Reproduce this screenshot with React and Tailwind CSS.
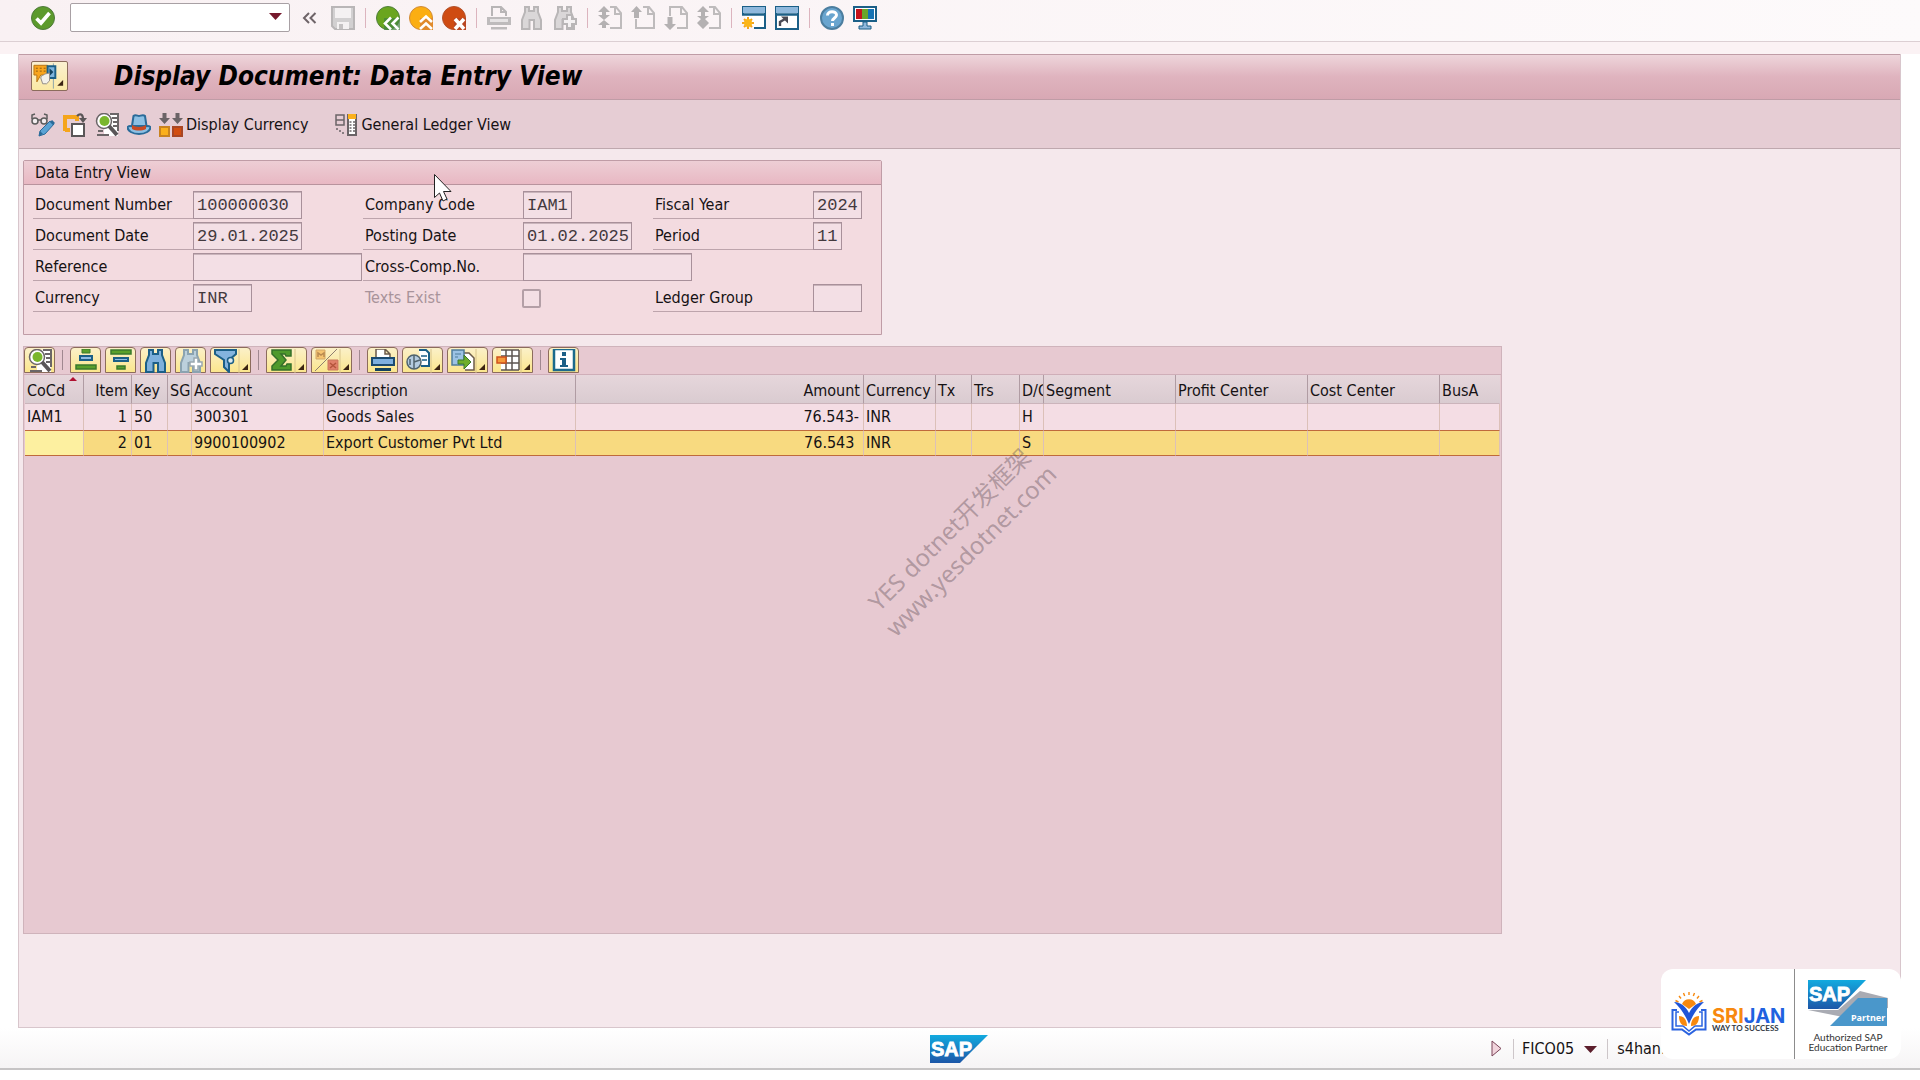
import { useState } from 'react'
import clsx from 'clsx'

const COLUMNS = [
  { key: 'cocd', label: 'CoCd', width: 'w-[59px]', sorted: true },
  { key: 'item', label: 'Item', width: 'w-[48px]', right: true },
  { key: 'pk', label: 'Key', width: 'w-[36px]' },
  { key: 'sg', label: 'SG', width: 'w-[24px]' },
  { key: 'account', label: 'Account', width: 'w-[132px]' },
  { key: 'text', label: 'Description', width: 'w-[252px]' },
  { key: 'amount', label: 'Amount', width: 'w-[288px]', right: true },
  { key: 'currency', label: 'Currency', width: 'w-[72px]' },
  { key: 'tx', label: 'Tx', width: 'w-[36px]' },
  { key: 'trs', label: 'Trs', width: 'w-[48px]' },
  { key: 'dc', label: 'D/C', width: 'w-[24px]' },
  { key: 'segment', label: 'Segment', width: 'w-[132px]' },
  { key: 'profit', label: 'Profit Center', width: 'w-[132px]' },
  { key: 'cost', label: 'Cost Center', width: 'w-[132px]' },
  { key: 'busa', label: 'BusA', width: 'w-[60px]' },
]

const ROWS = [
  { cocd: 'IAM1', item: '1', pk: '50', account: '300301', text: 'Goods Sales', amount: '76.543-', currency: 'INR', dc: 'H' },
  { cocd: '', item: '2', pk: '01', account: '9900100902', text: 'Export Customer Pvt Ltd', amount: '76.543\u00a0', currency: 'INR', dc: 'S', selected: true },
]

const UI_FONT = "font-['DejaVu_Sans_Condensed','DejaVu_Sans','Noto_Sans_CJK_SC',sans-serif]"

function Icon({ size = 'size-6', children }) {
  return (
    <svg viewBox="0 0 24 24" className={clsx(size, 'shrink-0')} fill="none" aria-hidden="true">
      {children}
    </svg>
  )
}

/* ---------- system toolbar icons ---------- */

const CheckIcon = () => (
  <Icon>
    <circle cx="12" cy="12" r="11.5" fill="#5c9a2c" stroke="#4f7a3c" />
    <path d="M5.500 12.500 10 17 18.500 7" stroke="#fff" strokeWidth="3.600" />
  </Icon>
)
const SaveIcon = () => (
  <Icon>
    <path d="M1 1h22v22H4l-3-3z" fill="#d2d0d1" stroke="#b9b6b7" strokeWidth="2" />
    <path d="M4 2h16v10H4z" fill="#f4f1f2" />
    <path d="M6 16h12v7H6z" fill="#f4f1f2" />
    <path d="M8 18h4v5H8z" fill="#c4c1c2" />
  </Icon>
)
const BackIcon = () => (
  <Icon>
    <circle cx="12" cy="12" r="11.500" fill="#6aa51f" stroke="#4f7f3c" />
    <path d="M8 12h16v12H8z" fill="#42833f" opacity=".7" />
    <path d="m15 11.500-6 6 6 6M22.500 11.500l-6 6 6 6" stroke="#fff" strokeWidth="2.600" />
  </Icon>
)
const UpIcon = () => (
  <Icon>
    <circle cx="12" cy="12" r="11.500" fill="#fbae12" stroke="#d08a3a" />
    <path d="M11 12h13v12H11z" fill="#e08a2c" />
    <path d="m11 16 6-5.500 6 5.500M11 23l6-5.500 6 5.500" stroke="#fff" strokeWidth="2.600" />
  </Icon>
)
const CancelIcon = () => (
  <Icon>
    <circle cx="12" cy="12" r="11.500" fill="#cf4b12" stroke="#b2522c" />
    <path d="M12 12h12v12H12z" fill="#b94622" />
    <path d="m13 13 9 10M22 13l-9 10" stroke="#fff" strokeWidth="3.600" />
  </Icon>
)
const PrintOffIcon = () => (
  <Icon>
    <path d="M5 10V1h9l5 5v4M14 1v5h5" stroke="#b8b5b6" strokeWidth="2" />
    <path d="M0 11h24v8H0z" fill="#bebbbc" />
    <path d="M3 13h18v3H3z" fill="#e6e3e4" />
    <path d="M4 21h16v2.500H4z" fill="#bebbbc" />
  </Icon>
)
function Binoculars({ stroke, fill }) {
  return (
    <path
      d="M5 1h4v4h5V1h4v5l3 8v9h-7v-9h-4.500v9H2v-9l3-8z"
      fill={fill}
      stroke={stroke}
      strokeWidth="2"
    />
  )
}
const FindOffIcon = () => (
  <Icon>
    <Binoculars stroke="#b9b6b7" fill="#dad7d8" />
  </Icon>
)
const FindNextOffIcon = () => (
  <Icon>
    <Binoculars stroke="#b9b6b7" fill="#dad7d8" />
    <path d="M14 9h5v4h4v5h-4v4h-5v-4h-4v-5h4z" fill="#f4f1f2" stroke="#b9b6b7" strokeWidth="2" />
  </Icon>
)

const PAGE_PATHS = {
  first: { page: 'M12 1h6l5 6v15H12', arrow: 'm6 0 6 6H8v3h4l-6 5 6 5H8v3H4v-3H0l6-5-6-5h4V6H0z' },
  prev: { page: 'M12 1h6l5 6v15H5V13', arrow: 'm5.500 0 5.500 6H8v6H3V6H0z' },
  next: { page: 'M6 10V1h12l5 6v15H13', arrow: 'm6 24 6-6H8.500v-7h-5v7H0z' },
  last: { page: 'M12 1h6l5 6v15H12', arrow: 'm6 0 6 6H8v4h4l-4 3 4 4-6 6-6-6 4-4-4-3h4V6H0z' },
}

function PageIcon({ kind }) {
  return (
    <Icon>
      <path d={PAGE_PATHS[kind].page} stroke="#bebbbc" strokeWidth="2" />
      <path d="M17 1v7h6" stroke="#bebbbc" strokeWidth="2" />
      <path d={PAGE_PATHS[kind].arrow} fill="#b4b1b2" />
    </Icon>
  )
}
const NewSessionIcon = () => (
  <Icon>
    <path d="M1 8V1h22v21H12" fill="#fff" stroke="#1b5f87" strokeWidth="2" />
    <path d="M1 1h22v6H1z" fill="#8fb8dc" />
    <path d="M0 8.500h24" stroke="#1b5f87" strokeWidth="2.500" />
    <path d="M6 11v12M0 17h12M2 13l8 8M10 13l-8 8" stroke="#f3a51c" strokeWidth="2" />
    <circle cx="6" cy="17" r="4" fill="#fbb618" />
  </Icon>
)
const ShortcutIcon = () => (
  <Icon>
    <path d="M1 1h22v22H1z" fill="#fff" stroke="#1b5f87" strokeWidth="2" />
    <path d="M1 1h22v6H1z" fill="#8fb8dc" />
    <path d="M0 8.500h24" stroke="#1b5f87" strokeWidth="2.500" />
    <path d="M5 20v-4l5-3" stroke="#4a4a55" strokeWidth="2.400" />
    <path d="M6 10.500h7v7z" fill="#4a4a55" />
  </Icon>
)
const HelpIcon = () => (
  <Icon>
    <circle cx="12" cy="12" r="11" fill="#69a5cf" stroke="#4c7e9f" strokeWidth="2" />
    <path d="M7.500 9.500c0-5 9-5 9-.5 0 3-4 3-4 6" stroke="#fff" strokeWidth="3" />
    <path d="M11 17h3v3h-3z" fill="#fff" />
  </Icon>
)
const MonitorIcon = () => (
  <Icon>
    <path d="M1 1h22v14H1z" fill="#fff" stroke="#1b5f87" strokeWidth="2" />
    <path d="M3 3h6v10H3z" fill="#c4121c" />
    <path d="M9 3h6v10H9z" fill="#6aa52a" />
    <path d="M15 3h6v10h-6z" fill="#1673b4" />
    <path d="M10 16h4v4h4v3H6v-3h4z" fill="#8fb8dc" stroke="#1b5f87" />
  </Icon>
)

/* ---------- application toolbar icons ---------- */

const ServicesIcon = () => (
  <svg viewBox="0 0 36 28" className="h-7 w-9" fill="none" aria-hidden="true">
    <path d="M22 1v26" stroke="#8aa4a8" />
    <path d="M2 3h14v10H9l-4 7v-7H2z" fill="#f9a51d" stroke="#b87414" />
    <path d="M4 6h2M8 6h2M12 6h2M4 9h2M8 9h2M12 9h2" stroke="#8d5c10" />
    <path d="M16 4h8v12h-8z" fill="#7fb4dc" stroke="#1b5f87" strokeWidth="2" />
    <path d="m18 6 4 4-4 4z" fill="#12425f" />
    <path d="M9 16c0-3 3-2 4-4l5-1v8l-3 3h-4z" fill="#f4f1ea" stroke="#8f8a86" />
    <path d="M32 18v6h-6z" fill="#3b2412" />
  </svg>
)
const ChangeIcon = () => (
  <Icon>
    <circle cx="4" cy="8" r="3" fill="#f3eef0" stroke="#5c5c5c" strokeWidth="1.500" />
    <circle cx="13" cy="8" r="3" fill="#f3eef0" stroke="#5c5c5c" strokeWidth="1.500" />
    <path d="M7 7h3M1 6V2l3-1M16 6V2l-3-1" stroke="#5c5c5c" strokeWidth="1.500" />
    <path d="M8 23 9 18 19 8l4 3-9 10z" fill="#5ba3d4" stroke="#2a6b99" />
    <path d="m20 8 3 3" stroke="#2a6b99" strokeWidth="3" />
    <path d="m8 23 1-5 3 3z" fill="#2a6b99" />
  </Icon>
)
const CopyDocIcon = () => (
  <Icon>
    <path d="M2 18V4h12v4M2 17h5" stroke="#f5a51c" strokeWidth="4" />
    <path d="M9 11h12v12H9z" fill="#fff" stroke="#5a5658" strokeWidth="2" />
    <path d="M14 3c3-3 6-2 6 3" stroke="#5a5658" strokeWidth="2.200" />
    <path d="M16 5h8l-4 5z" fill="#5a5658" />
  </Icon>
)
const DetailIcon = () => (
  <Icon>
    <path d="M9 1h14v22H9z" fill="#fff" />
    <path d="M15 1h8v17" stroke="#6b6668" strokeWidth="2" />
    <path d="M17 5h5M18 9h4M18 13h4M2 22h12M3 18h5" stroke="#6b6668" strokeWidth="2" />
    <circle cx="9" cy="8" r="7.500" fill="#fff" stroke="#6b6668" strokeWidth="1.500" />
    <circle cx="9.500" cy="8" r="5" fill="#7ab62c" />
    <path d="m14 13 8 9" stroke="#5a5658" strokeWidth="4" />
  </Icon>
)
const HatIcon = () => (
  <Icon>
    <path d="M0.500 14c3-2 4 0 5-1h13c1 1 2-1 5 1 0 4-5 7-11.500 7s-11.500-3-11.500-7z" fill="#8cc0e4" stroke="#2a6b99" strokeWidth="2" />
    <path d="M5 13 6.500 3c2-2 4 0 5.500 0s4-2 6 0L19.500 13z" fill="#8cc0e4" stroke="#2a6b99" strokeWidth="2" />
    <path d="M5 12c4 2.500 10 2.500 14 0v4c-4 2-10 2-14 0z" fill="#c84a24" />
  </Icon>
)
const DisplayCurrencyIcon = () => (
  <Icon>
    <path d="M3.500 0h4v5h3.500l-5.500 6L0 5h3.500zM16.500 0h4v5H24l-5.500 6L13 5h3.500z" fill="#6b6467" />
    <path d="M1 14h9v9H1z" fill="#fbb01c" stroke="#c98320" strokeWidth="2" />
    <path d="M14 14h9v9h-9z" fill="#d24d10" stroke="#a84624" strokeWidth="2" />
  </Icon>
)
const LedgerIcon = () => (
  <Icon>
    <path d="M2 2h8v10H2zM2 7h8" stroke="#6b6467" strokeWidth="1.500" />
    <path d="M2 16h2M5 18h2M8 20h2" stroke="#6b6467" strokeWidth="1.500" />
    <path d="M14 2h8v20h-8z" fill="#fff" stroke="#6b6467" strokeWidth="2" />
    <path d="M14 1h8v5h-8z" fill="#fbb01c" />
    <path d="M15.500 9h2M19 9h2M15.500 12h2M19 12h2M15.500 15h2M19 15h2M15.500 18h2M19 18h2" stroke="#6b6467" strokeWidth="1.500" />
  </Icon>
)

/* ---------- list toolbar icons ---------- */

const SortAscIcon = () => (
  <Icon>
    <path d="M8 0h8v4H8z" fill="#5aa02c" stroke="#3a7a2c" />
    <path d="M6 7h12v4H6z" fill="#8fbce4" stroke="#1b5f87" strokeWidth="2" />
    <path d="M2 16h20v4H2z" fill="#5aa02c" stroke="#3a7a2c" strokeWidth="1.500" />
  </Icon>
)
const SortDescIcon = () => (
  <Icon>
    <path d="M2 1h20v4H2z" fill="#5aa02c" stroke="#3a7a2c" strokeWidth="1.500" />
    <path d="M5 9h14v3H5z" fill="#8fbce4" stroke="#1b5f87" strokeWidth="2" />
    <path d="M8 17h8v3H8z" fill="#5aa02c" stroke="#3a7a2c" strokeWidth="1.500" />
  </Icon>
)
const FindIcon = () => (
  <Icon>
    <Binoculars stroke="#1b5f87" fill="#7db0dc" />
  </Icon>
)
const FindNextIcon = () => (
  <Icon>
    <Binoculars stroke="#8ba3b0" fill="#bcd0dc" />
    <path d="M15 9h4v4h4v4h-4v4h-4v-4h-4v-4h4z" fill="#fff" stroke="#9aa8b0" strokeWidth="1.500" />
  </Icon>
)
const FilterIcon = () => (
  <Icon>
    <path d="M1 1h21v4l-7 6v12l-5-5v-7L1 5z" fill="#84b4de" stroke="#1b5f87" strokeWidth="2" />
    <circle cx="16.500" cy="11.500" r="3" fill="#dce8ee" stroke="#1b5f87" strokeWidth="1.500" />
  </Icon>
)
const SumIcon = () => (
  <Icon>
    <path d="M2 1h19v6h-5l-1-2h-4l5 6-5 6h5l1-2h4v6H2v-4l6-6-6-6z" fill="#4f9a2c" stroke="#35702a" strokeWidth="1.500" />
  </Icon>
)
const SubtotalOffIcon = () => (
  <Icon>
    <path d="M0 22 22 0" stroke="#8f7f70" />
    <path d="M1 1h9v9H1z" fill="#f6c470" stroke="#d2a868" />
    <path d="M3 8V4l3 2 3-2v4" stroke="#b98a50" strokeWidth="1.500" />
    <path d="M13 11h10v10H13z" fill="#e0806a" stroke="#c8765c" />
    <path d="m15 14 6 5M21 14l-6 5" stroke="#b4543c" strokeWidth="1.500" />
  </Icon>
)
const PrintIcon = () => (
  <Icon>
    <path d="M5 9V0h9l5 5v4M14 0v5h5" fill="#fff" stroke="#6b5a4a" strokeWidth="1.500" />
    <path d="M1 9h22v7H1z" fill="#7eb0e0" stroke="#1b4a70" strokeWidth="2" />
    <path d="M4 19h16v3H4z" fill="#12425f" />
  </Icon>
)
const ViewsIcon = () => (
  <Icon>
    <path d="M13 1h7l3 3v13h-8" fill="#fff" stroke="#1b5f87" strokeWidth="2" />
    <path d="M15 7h6M16 11h5" stroke="#1b5f87" strokeWidth="1.500" />
    <circle cx="8" cy="13" r="7" fill="#b4cce0" stroke="#50646e" strokeWidth="1.500" />
    <path d="M8 6v14M8 13l6-2M4 10v6" stroke="#50646e" strokeWidth="1.500" />
  </Icon>
)
const ExportIcon = () => (
  <Icon>
    <path d="M12 4h6l5 5v12h-9" fill="#fff" stroke="#6b5a4a" strokeWidth="1.500" />
    <path d="M1 1h12v15H1z" fill="#9cc2e4" stroke="#4f7c9a" strokeWidth="1.500" />
    <path d="M4 5h6M4 8h3" stroke="#4f7c9a" />
    <path d="M7 11h6V6l7 7-7 7v-5H7z" fill="#6fae2a" stroke="#3a7a2c" />
  </Icon>
)
const LayoutIcon = () => (
  <Icon>
    <path d="M5 1h18v20H5z" fill="#fff" />
    <path d="M5 1h18M5 7h18M5 14h18M5 21h18M10 1v20M16 1v20M23 1v20" stroke="#5c5450" strokeWidth="1.500" />
    <path d="M1 8h9v6H1z" fill="#f59a3a" stroke="#d0521c" strokeWidth="1.500" />
  </Icon>
)
const InfoIcon = () => (
  <Icon>
    <path d="M2 0h20v21H2z" fill="#fff" stroke="#1b6a8c" strokeWidth="2.500" />
    <path d="M10 3h4v4h-4zM8 9h6v7h2v2H8v-2h2v-5H8z" fill="#1b5f87" />
  </Icon>
)

/* ---------- building blocks ---------- */

function IconButton({ label, children }) {
  return (
    <button type="button" aria-label={label} title={label} className="flex shrink-0 items-center">
      {children}
    </button>
  )
}

function Divider() {
  return <span className="mx-px h-5 w-px shrink-0 bg-[#dcb4be]" />
}

function ListButton({ label, menu, children }) {
  return (
    <button
      type="button"
      aria-label={label}
      title={label}
      className={clsx(
        'flex h-[26px] shrink-0 items-start rounded-t-sm border border-[#8c6c5c] bg-linear-to-b from-[#fbf0c8] to-[#fbe68c] pt-px pl-[3px]',
        menu ? 'w-[41px]' : 'w-[31px]',
      )}
    >
      {children}
      {menu && (
        <svg viewBox="0 0 12 24" className="h-6 w-3 shrink-0" aria-hidden="true">
          <path d="M1 0v24" stroke="#d8c48c" />
          <path d="M10 15v6H4z" fill="#3b2412" />
        </svg>
      )}
    </button>
  )
}

function ListDivider() {
  return <span className="mx-[3px] h-5 w-px shrink-0 self-center bg-[#a08890]" />
}

function Field({ id, label, value = '', width }) {
  return (
    <div className="flex h-7 items-end">
      <label htmlFor={id} className="h-7 w-40 shrink-0 border-b border-[#bda4ac] pl-0.5 leading-7">
        {label}
      </label>
      <input
        id={id}
        readOnly
        defaultValue={value}
        className={clsx(
          "h-7 shrink-0 border border-[#a8909a] bg-[#f3dfe5] pl-[3px] font-['Liberation_Mono',monospace] text-[17px] text-[#43393e] shadow-[inset_0_1px_0_#c9b4bb] outline-none",
          width,
        )}
      />
    </div>
  )
}

function SystemToolbar() {
  const [command, setCommand] = useState('')
  return (
    <header className="flex h-[42px] shrink-0 items-center gap-[9px] border-b border-[#dccfd3] bg-linear-to-r from-[#f9f1f3] to-[#fdfafb] pb-1.5 pl-[31px]">
      <IconButton label="Enter"><CheckIcon /></IconButton>
      <div className="relative ml-1.5">
        <input
          aria-label="Command field"
          value={command}
          onChange={(e) => setCommand(e.target.value)}
          className="block h-[29px] w-[220px] rounded-xs border border-[#a8a0a4] bg-white px-2 outline-none"
        />
        <button type="button" aria-label="Command history" className="absolute top-2.5 right-2">
          <svg viewBox="0 0 13 7" className="block h-[7px] w-[13px]" aria-hidden="true">
            <path d="M0 0h13L6.500 7z" fill="#75182c" />
          </svg>
        </button>
      </div>
      <button type="button" aria-label="Hide command field" className="mr-1 ml-[3px] flex w-4 shrink-0 items-center">
        <svg viewBox="0 0 16 12" className="h-3 w-4" fill="none" aria-hidden="true">
          <path d="M7 1 2 6l5 5M13.500 1l-5 5 5 5" stroke="#6e6468" strokeWidth="2" />
        </svg>
      </button>
      <IconButton label="Save"><SaveIcon /></IconButton>
      <Divider />
      <IconButton label="Back"><BackIcon /></IconButton>
      <IconButton label="Exit"><UpIcon /></IconButton>
      <IconButton label="Cancel"><CancelIcon /></IconButton>
      <Divider />
      <IconButton label="Print"><PrintOffIcon /></IconButton>
      <IconButton label="Find"><FindOffIcon /></IconButton>
      <IconButton label="Find next"><FindNextOffIcon /></IconButton>
      <Divider />
      <IconButton label="First page"><PageIcon kind="first" /></IconButton>
      <IconButton label="Previous page"><PageIcon kind="prev" /></IconButton>
      <IconButton label="Next page"><PageIcon kind="next" /></IconButton>
      <IconButton label="Last page"><PageIcon kind="last" /></IconButton>
      <Divider />
      <IconButton label="New session"><NewSessionIcon /></IconButton>
      <IconButton label="Create shortcut"><ShortcutIcon /></IconButton>
      <Divider />
      <IconButton label="Help"><HelpIcon /></IconButton>
      <IconButton label="Local layout"><MonitorIcon /></IconButton>
    </header>
  )
}

function TitleBar() {
  return (
    <div className="flex h-[46px] shrink-0 items-center border-y border-[#bf9ca6] bg-linear-to-b from-[#eed5db] via-[#dfb3be] to-[#d8a8b4] pb-0.5 pl-3">
      <button
        type="button"
        aria-label="Services for object"
        className="flex h-[30px] w-[37px] items-center justify-center rounded-xs border border-[#8c6c5c] bg-linear-to-b from-[#fbf0d0] to-[#fbe9a4]"
      >
        <ServicesIcon />
      </button>
      <h1 className="ml-[46px] text-[26px] leading-8 font-bold text-black italic">
        Display Document: Data Entry View
      </h1>
    </div>
  )
}

function AppToolbar() {
  return (
    <div className="flex h-[49px] shrink-0 items-center gap-2 border-b border-[#bfa8ae] bg-[#e6cdd4] pt-px pl-3">
      <IconButton label="Display/Change"><ChangeIcon /></IconButton>
      <IconButton label="Display another document"><CopyDocIcon /></IconButton>
      <IconButton label="Call up document"><DetailIcon /></IconButton>
      <IconButton label="Document header"><HatIcon /></IconButton>
      <button type="button" className="flex items-center gap-[3px]">
        <DisplayCurrencyIcon />
        Display Currency
      </button>
      <button type="button" className="ml-[18px] flex items-center gap-[3px]">
        <LedgerIcon />
        General Ledger View
      </button>
    </div>
  )
}

function DocumentHeader() {
  return (
    <section className="h-[175px] w-[859px] shrink-0 rounded-t-xs border border-[#bf9ca6] bg-[#f3dbe0]">
      <h2 className="h-6 border-b border-[#b8939d] bg-linear-to-b from-[#edced5] to-[#e8b8c3] pl-[11px] leading-6">
        Data Entry View
      </h2>
      <div className="grid grid-cols-[330px_290px_1fr] gap-y-[3px] pt-1.5 pl-[9px]">
        <Field id="doc-number" label="Document Number" value="100000030" width="w-[109px]" />
        <Field id="company" label="Company Code" value="IAM1" width="w-[49px]" />
        <Field id="year" label="Fiscal Year" value="2024" width="w-[49px]" />
        <Field id="doc-date" label="Document Date" value="29.01.2025" width="w-[109px]" />
        <Field id="posting-date" label="Posting Date" value="01.02.2025" width="w-[109px]" />
        <Field id="period" label="Period" value="11" width="w-[29px]" />
        <Field id="reference" label="Reference" width="w-[169px]" />
        <Field id="cross-comp" label="Cross-Comp.No." width="w-[169px]" />
        <span />
        <Field id="doc-currency" label="Currency" value="INR" width="w-[59px]" />
        <div className="flex h-7 items-center">
          <label htmlFor="texts-exist" className="w-[159px] pl-0.5 text-[#a8939a]">Texts Exist</label>
          <input
            id="texts-exist"
            type="checkbox"
            disabled
            className="size-[19px] appearance-none rounded-xs border-2 border-[#b39fa6] bg-[#f3dfe4]"
          />
        </div>
        <Field id="ledger-group" label="Ledger Group" width="w-[49px]" />
      </div>
    </section>
  )
}

function ListToolbar() {
  return (
    <div className="flex h-7 items-end gap-1 border-b border-[#cfaeb8] pb-px">
      <ListButton label="Details"><DetailIcon /></ListButton>
      <ListDivider />
      <ListButton label="Sort ascending"><SortAscIcon /></ListButton>
      <ListButton label="Sort descending"><SortDescIcon /></ListButton>
      <ListButton label="Find"><FindIcon /></ListButton>
      <ListButton label="Find next"><FindNextIcon /></ListButton>
      <ListButton label="Filter" menu><FilterIcon /></ListButton>
      <ListDivider />
      <ListButton label="Total" menu><SumIcon /></ListButton>
      <ListButton label="Subtotals" menu><SubtotalOffIcon /></ListButton>
      <ListDivider />
      <ListButton label="Print"><PrintIcon /></ListButton>
      <ListButton label="Views" menu><ViewsIcon /></ListButton>
      <ListButton label="Export" menu><ExportIcon /></ListButton>
      <ListButton label="Change layout" menu><LayoutIcon /></ListButton>
      <ListDivider />
      <ListButton label="Information"><InfoIcon /></ListButton>
    </div>
  )
}

function ItemList() {
  return (
    <section className="w-[1479px] flex-1 border border-[#cfb3bb] bg-[#e7c9d1]">
      <ListToolbar />
      <table className="ml-px w-[1475px] table-fixed border-separate border-spacing-0">
        <colgroup>
          {COLUMNS.map((c) => <col key={c.key} className={c.width} />)}
        </colgroup>
        <thead>
          <tr className="h-[29px] bg-linear-to-b from-[#e6d6db] to-[#d9cbd0]">
            {COLUMNS.map((c) => (
              <th
                key={c.key}
                scope="col"
                className={clsx(
                  'relative overflow-hidden border-r border-b border-r-[#b09ca3] border-b-[#cbb4bb] pt-1 font-normal whitespace-nowrap last:border-r-transparent',
                  c.right ? 'pr-[3px] text-right' : 'pl-0.5 text-left',
                )}
              >
                {c.label}
                {c.sorted && (
                  <svg viewBox="0 0 8 4" className="absolute top-0.5 right-1.5 h-1 w-2" aria-label="Sorted ascending">
                    <path d="M4 0 8 4H0z" fill="#b01030" />
                  </svg>
                )}
              </th>
            ))}
          </tr>
        </thead>
        <tbody>
          {ROWS.map((row) => (
            <tr key={row.item} className={clsx('h-[26px]', row.selected ? 'bg-[#f8da80]' : 'bg-[#f4dde4]')}>
              {COLUMNS.map((c) => (
                <td
                  key={c.key}
                  className={clsx(
                    'overflow-hidden border-r border-r-[#dcc0b8] whitespace-nowrap',
                    c.right ? 'pr-1 text-right' : 'pl-0.5',
                    row.selected && 'border-y border-y-[#bf6a3c]',
                    row.selected && c.key === 'cocd' && 'bg-[#fdf0a0]',
                  )}
                >
                  {row[c.key]}
                </td>
              ))}
            </tr>
          ))}
        </tbody>
      </table>
    </section>
  )
}

function SapWordmark() {
  return (
    <text x="1" y="21" fontSize="20" fontWeight="700" fill="#fff" stroke="#fff" strokeWidth=".8" fontFamily="Liberation Sans, sans-serif">
      SAP
    </text>
  )
}

function SapLogo() {
  return (
    <svg viewBox="0 0 58 28" className="h-7 w-[58px]" role="img" aria-label="SAP">
      <defs>
        <linearGradient id="sap-blue" x1="0" y1="0" x2="0" y2="1">
          <stop offset="0" stopColor="#12aadf" />
          <stop offset="1" stopColor="#1d57a8" />
        </linearGradient>
      </defs>
      <path d="M0 0h58L30 28H0z" fill="url(#sap-blue)" />
      <SapWordmark />
    </svg>
  )
}

function StatusBar() {
  return (
    <footer className="flex h-[42px] shrink-0 items-center border-b-2 border-[#c6c4c5] bg-linear-to-b from-white to-[#f6f4f5] pt-0.5">
      <div className="flex flex-1 justify-end">
        <SapLogo />
      </div>
      <div className="flex w-[932px] items-center pl-[503px]">
        <button type="button" aria-label="Expand status bar" className="flex">
          <svg viewBox="0 0 12 18" className="h-[18px] w-3" aria-hidden="true">
            <path d="M1 1v15l9-7.500z" fill="#f1d4dc" stroke="#7a4458" />
          </svg>
        </button>
        <span className="ml-2.5 h-5 w-px bg-[#cdc6c9]" />
        <span className="ml-2">FICO05</span>
        <button type="button" aria-label="System details" className="ml-2.5 flex">
          <svg viewBox="0 0 13 7" className="h-[7px] w-[13px]" aria-hidden="true">
            <path d="M0 0h13L6.500 7z" fill="#5c1e2c" />
          </svg>
        </button>
        <span className="ml-2.5 h-5 w-px bg-[#cdc6c9]" />
        <span className="ml-[9px]">s4han.</span>
      </div>
    </footer>
  )
}

function SrijanLogo() {
  return (
    <svg viewBox="0 0 116 44" className="h-11 w-[116px]" fill="none" role="img" aria-label="Srijan, way to success">
      <path d="M11 12a7.500 7.500 0 0 1 14 0l-7 5z" fill="#f7890f" />
      <path d="M18 0v3M12.500 1l1.200 3M23.500 1l-1.200 3M8 4l2 2.500M28 4l-2 2.500M4.500 8.500l3 1.500M31.500 8.500l-3 1.500" stroke="#f7890f" strokeWidth="1.400" />
      <path d="M3 10c7 0 12 5 15 11 3-6 8-11 15-11-5 5-10 10-15 22C13 20 8 15 3 10z" fill="#1f55d8" />
      <path d="M6 18H1.500v19.500H11l7 5 7-5h9.500V18H30" stroke="#2a63e0" strokeWidth="2" />
      <path d="M8 20H5v14h7l6 5 6-5h7V20h-3" stroke="#2a63e0" strokeWidth="1.500" />
      <path d="M8 24c5 0 8 4 8 10-6 0-8-4-8-10zM28 24c-5 0-8 4-8 10 6 0 8-4 8-10z" fill="#f7890f" />
      <text x="41" y="31" fontSize="20" fontWeight="700" fontFamily="Inter, sans-serif" fill="#f7890f">
        SRI<tspan fill="#1f62e0">JAN</tspan>
      </text>
      <text x="41" y="39" fontSize="8" fontWeight="700" fontFamily="Lato, sans-serif" fill="#333a44">WAY TO SUCCESS</text>
    </svg>
  )
}

function PartnerLogo() {
  return (
    <svg viewBox="0 0 80 48" className="h-12 w-20" role="img" aria-label="SAP Partner">
      <path d="M0 30h30L52 11l28 7v10L40 38z" fill="#a9abb3" />
      <path d="M0 0h58L30 29H0z" fill="url(#sap-blue)" />
      <SapWordmark />
      <path d="M50 18h29v28H22z" fill="#4a97cb" />
      <text x="43" y="41" fontSize="9" fontWeight="700" fill="#fff" fontFamily="Noto Sans, sans-serif">Partner</text>
    </svg>
  )
}

function PartnerCard() {
  return (
    <aside className="absolute right-[19px] bottom-[21px] flex h-[90px] w-60 rounded-xl bg-white">
      <div className="flex w-[134px] items-center border-r border-[#8c8c8c] pl-2.5">
        <SrijanLogo />
      </div>
      <div className="flex flex-1 flex-col items-center pt-[11px] font-['Lato',sans-serif] text-[10px] leading-[10px] text-[#333]">
        <PartnerLogo />
        <span className="mt-1">Authorized SAP</span>
        <span>Education Partner</span>
      </div>
    </aside>
  )
}

function Watermark() {
  return (
    <div className="pointer-events-none absolute top-1/2 left-1/2 -translate-x-1/2 -translate-y-1/2 -rotate-45 text-center font-['Noto_Sans','Noto_Sans_CJK_SC',sans-serif] text-[24px] leading-[30px] whitespace-nowrap text-[#5a4a52]/40">
      <p>YES dotnet开发框架</p>
      <p>www.yesdotnet.com</p>
    </div>
  )
}

function Pointer() {
  return (
    <svg viewBox="0 0 18 28" className="pointer-events-none absolute top-[174px] left-[434px] h-7 w-[18px]" aria-hidden="true">
      <path d="M.5.500v23l5-4.500 3.500 8 4-2-3.500-7.500h7.500z" fill="#fff" stroke="#222" />
    </svg>
  )
}

export default function App() {
  return (
    <div className={clsx('relative flex min-h-screen flex-col bg-white pb-[10px] text-[16px] leading-6 text-[#161214]', UI_FONT)}>
      <SystemToolbar />
      <div className="h-3 shrink-0 bg-[#fbf2f4]" />
      <main className="mr-[19px] ml-[18px] flex flex-1 flex-col border-x border-b border-[#d8c6cc] bg-[#f5e8ec]">
        <TitleBar />
        <AppToolbar />
        <div className="flex flex-1 flex-col gap-[11px] px-1 pt-[11px] pb-[93px]">
          <DocumentHeader />
          <ItemList />
        </div>
      </main>
      <StatusBar />
      <PartnerCard />
      <Watermark />
      <Pointer />
    </div>
  )
}
